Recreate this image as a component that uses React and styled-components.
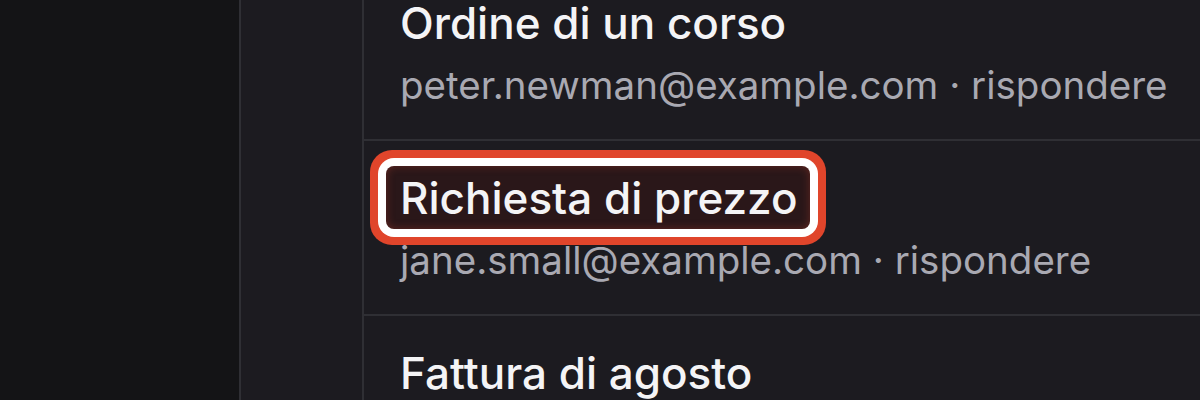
import React from 'react'
import styled, { createGlobalStyle } from 'styled-components'

const GlobalStyle = createGlobalStyle`
    html, body {
        margin: 0;
        padding: 0;
        background: #141416;
        font-family: Inter, "Noto Sans", sans-serif;
        -webkit-font-smoothing: antialiased;
    }
`;

const Shell = styled.div`
    display: flex;
    width: 1200px;
    height: 400px;
    overflow: hidden;
    background: #141416;
`;

const Sidebar = styled.aside`
    width: 239px;
    flex-shrink: 0;
    background: #141416;
    border-right: 2px solid #2f2f34;
`;

const Rail = styled.nav`
    width: 121px;
    flex-shrink: 0;
    background: #1c1b20;
    border-right: 2px solid #2f2f34;
`;

const MessageList = styled.ul`
    flex: 1;
    list-style: none;
    margin: -34px 0 0 0;
    padding: 0;
    background: #1c1b20;
`;

const MessageRow = styled.li`
    display: flex;
    flex-direction: column;
    align-items: flex-start;
    padding: 25px 0 31px 22px;
    border-bottom: 2px solid #2f2f34;
`;

const Subject = styled.a`
    display: inline-block;
    padding: 6px 12px 5px 14px;
    font-size: 44px;
    line-height: 52px;
    font-weight: 500;
    color: #f4f4f6;
    text-decoration: none;
    white-space: nowrap;
    border-radius: 8px;
    background: ${p => p.$focused ? '#2a1719' : 'transparent'};
    box-shadow: ${p => p.$focused
        ? 'inset 0 0 8px rgba(210, 70, 50, 0.35), 0 0 0 8px #ffffff, 0 0 0 16px #e0452b'
        : 'none'};
`;

const Meta = styled.div`
    margin-top: 8px;
    padding-left: 14px;
    font-size: 38.5px;
    line-height: 46px;
    color: #a9a9b2;
    white-space: nowrap;
`;

const messages = [
    { subject: 'Ordine di un corso', from: 'peter.newman@example.com', action: 'rispondere' },
    { subject: 'Richiesta di prezzo', from: 'jane.small@example.com', action: 'rispondere', focused: true },
    { subject: 'Fattura di agosto', from: 'accounts@example.com', action: 'rispondere' },
]

export default function App() {
    return (
        <>
            <GlobalStyle />
            <Shell>
                <Sidebar />
                <Rail />
                <MessageList>
                    {messages.map(m => (
                        <MessageRow key={m.subject}>
                            <Subject href="#" $focused={m.focused}>{m.subject}</Subject>
                            <Meta>{m.from} · {m.action}</Meta>
                        </MessageRow>
                    ))}
                </MessageList>
            </Shell>
        </>
    )
}
